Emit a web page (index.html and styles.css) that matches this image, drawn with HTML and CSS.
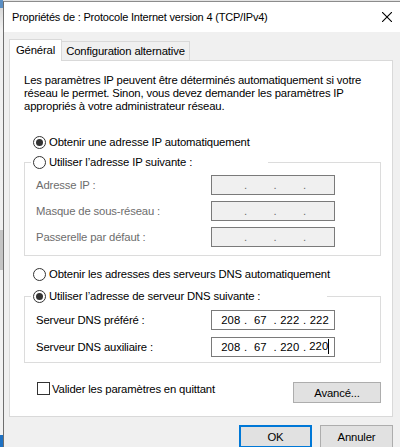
FILE: index.html
```html
<!DOCTYPE html>
<html lang="fr">
<head>
<meta charset="utf-8">
<title>Propriétés de : Protocole Internet version 4 (TCP/IPv4)</title>
<link rel="stylesheet" href="styles.css">
</head>
<body>
<div class="desktop-edge"></div>
<div class="window">
  <div class="titlebar">
    <span class="title">Propriétés de : Protocole Internet version 4 (TCP/IPv4)</span>
    <svg class="close" width="10" height="10" viewBox="0 0 10 10"><path d="M0 0 L10 10 M10 0 L0 10" stroke="#000" stroke-width="1.1" fill="none"/></svg>
  </div>
  <div class="client">
    <div class="tabs">
      <div class="tab active">Général</div>
      <div class="tab inactive">Configuration alternative</div>
    </div>
    <div class="panel">
      <p class="desc">Les paramètres IP peuvent être déterminés automatiquement si votre<br>réseau le permet. Sinon, vous devez demander les paramètres IP<br>appropriés à votre administrateur réseau.</p>

      <div class="radio-row ip-auto"><span class="radio checked"></span><span>Obtenir une adresse IP automatiquement</span></div>

      <fieldset class="group group-ip">
        <legend class="legend legend-ip"><div class="legend-inner"><span class="radio"></span><span>Utiliser l’adresse IP suivante :</span></div></legend>
        <div class="field disabled"><span class="label">Adresse IP :</span><div class="ipbox off"><span class="oct"></span><span class="dot">.</span><span class="oct"></span><span class="dot">.</span><span class="oct"></span><span class="dot">.</span><span class="oct"></span></div></div>
        <div class="field disabled"><span class="label">Masque de sous-réseau :</span><div class="ipbox off"><span class="oct"></span><span class="dot">.</span><span class="oct"></span><span class="dot">.</span><span class="oct"></span><span class="dot">.</span><span class="oct"></span></div></div>
        <div class="field disabled"><span class="label">Passerelle par défaut :</span><div class="ipbox off"><span class="oct"></span><span class="dot">.</span><span class="oct"></span><span class="dot">.</span><span class="oct"></span><span class="dot">.</span><span class="oct"></span></div></div>
      </fieldset>

      <div class="radio-row dns-auto"><span class="radio"></span><span>Obtenir les adresses des serveurs DNS automatiquement</span></div>

      <fieldset class="group group-dns">
        <legend class="legend legend-dns"><div class="legend-inner"><span class="radio checked"></span><span>Utiliser l’adresse de serveur DNS suivante :</span></div></legend>
        <div class="field"><span class="label">Serveur DNS préféré :</span><div class="ipbox"><span class="oct">208</span><span class="dot">.</span><span class="oct">67</span><span class="dot">.</span><span class="oct">222</span><span class="dot">.</span><span class="oct">222</span></div></div>
        <div class="field"><span class="label">Serveur DNS auxiliaire :</span><div class="ipbox"><span class="oct">208</span><span class="dot">.</span><span class="oct">67</span><span class="dot">.</span><span class="oct">220</span><span class="dot">.</span><span class="oct">220<span class="caret"></span></span></div></div>
      </fieldset>

      <div class="bottom-row">
        <div class="check-row"><span class="checkbox"></span><span>Valider les paramètres en quittant</span></div>
        <button class="btn advanced">Avancé...</button>
      </div>
    </div>
    <div class="dialog-buttons">
      <button class="btn dlg default">OK</button>
      <button class="btn dlg">Annuler</button>
    </div>
  </div>
</div>
</body>
</html>
```
FILE: styles.css
```css
* { box-sizing: border-box; }
html, body { margin: 0; padding: 0; }
body {
  width: 400px;
  height: 447px;
  overflow: hidden;
  display: flex;
  padding-top: 1px;
  background: #e4e4e4;
  font-family: "Liberation Sans", Arial, sans-serif;
  font-size: 11.3px;
  letter-spacing: -0.15px;
  color: #000;
}
.desktop-edge {
  width: 3px;
  flex: none;
  margin-top: -1px;
  background: linear-gradient(to bottom,
    #5b8fc4 0, #5b8fc4 8px, #d9d9d9 8px, #f2f2f2 30px,
    #efefef 230px, #c4c4c4 230px, #c4c4c4 270px,
    #f2f2f2 270px, #f2f2f2 435px, #1f72c4 435px);
}
.window {
  flex: 1;
  display: flex;
  flex-direction: column;
  border-left: 1px solid #6e6e6e;
  border-top: 1px solid #8c8c8c;
  background: #f0f0f0;
}
.titlebar {
  height: 30px;
  flex: none;
  background: #fff;
  display: flex;
  align-items: center;
  justify-content: space-between;
  padding: 0 8px 0 8px;
}
.title { white-space: nowrap; font-size: 11px; letter-spacing: -0.2px; }
.close { flex: none; margin-top: -1px; }
.client {
  flex: 1;
  padding: 7px 7px 0 5px;
}
.tabs {
  display: flex;
  align-items: flex-end;
  height: 21px;
}
.tab {
  border: 1px solid #d9d9d9;
  border-bottom: none;
  white-space: nowrap;
  display: flex;
  align-items: center;
  justify-content: center;
}
.tab.active {
  width: 53px;
  height: 22px;
  padding-bottom: 2px;
  background: #fff;
  position: relative;
  z-index: 1;
  margin-bottom: -1px;
}
.tab.inactive {
  width: 128px;
  height: 19px;
  border-left: none;
  background: #f0f0f0;
}
.panel {
  background: #fff;
  border: 1px solid #d9d9d9;
  padding: 13px 11px 13px 14px;
}
.desc {
  margin: 0;
  line-height: 13px;
  white-space: nowrap;
}
.radio-row {
  display: flex;
  align-items: center;
  height: 20px;
  margin-left: 9px;
  white-space: nowrap;
}
.ip-auto { margin-top: 19px; }
.dns-auto { margin-top: 8px; }
.radio {
  width: 13px;
  height: 13px;
  flex: none;
  border: 1px solid #333;
  border-radius: 50%;
  margin-right: 3px;
  display: grid;
  place-items: center;
  background: #fff;
}
.radio.checked::after {
  content: "";
  width: 7px;
  height: 7px;
  border-radius: 50%;
  background: #333;
}
.group {
  margin: 0;
  border: 1px solid #dcdcdc;
  min-width: 0;
}
.group-ip { padding: 3px 0 8px 11px; }
.group-dns { padding: 4px 0 5px 11px; margin-top: 2px; }
.legend {
  padding: 0 2px;
  margin-left: -5px;
  height: 20px;
}
.legend-ip { width: 237px; }
.legend-dns { width: 296px; }
.legend-inner {
  display: flex;
  align-items: center;
  height: 20px;
  white-space: nowrap;
}
.field {
  display: flex;
  align-items: center;
  height: 20px;
}
.group-ip .field + .field { margin-top: 6px; }
.group-dns .field + .field { margin-top: 7px; }
.label {
  width: 175px;
  flex: none;
  white-space: nowrap;
}
.field.disabled .label { color: #6d6d6d; }
.ipbox {
  width: 124px;
  height: 20px;
  border: 1px solid #7a7a7a;
  background: #fff;
  display: flex;
  align-items: center;
  padding: 0 2px 0 6px;
}
.ipbox.off { background: #f0f0f0; color: #6d6d6d; }
.oct {
  flex: 1;
  text-align: center;
  white-space: nowrap;
  letter-spacing: 0;
}
.dot {
  width: 4px;
  flex: none;
  text-align: center;
}
.caret {
  display: inline-block;
  width: 1px;
  height: 15px;
  background: #000;
  vertical-align: middle;
  margin-top: -2px;
}
.bottom-row {
  display: flex;
  justify-content: space-between;
  align-items: flex-start;
  margin-top: 19px;
}
.check-row {
  display: flex;
  align-items: center;
  height: 13px;
  margin-left: 13px;
  white-space: nowrap;
}
.checkbox {
  width: 13px;
  height: 13px;
  border: 1px solid #333;
  margin-right: 2px;
  flex: none;
}
.btn {
  font-family: inherit;
  font-size: 11.3px;
  letter-spacing: -0.15px;
  color: #000;
  background: #e1e1e1;
  border: 1px solid #adadad;
  border-radius: 0;
  padding: 0;
  margin: 0;
}
.advanced { width: 88px; height: 21px; }
.dialog-buttons {
  display: flex;
  justify-content: flex-end;
  gap: 8px;
  margin-top: 8px;
}
.dlg { width: 73px; height: 23px; }
.dlg.default { border: 2px solid #0078d7; }
```
